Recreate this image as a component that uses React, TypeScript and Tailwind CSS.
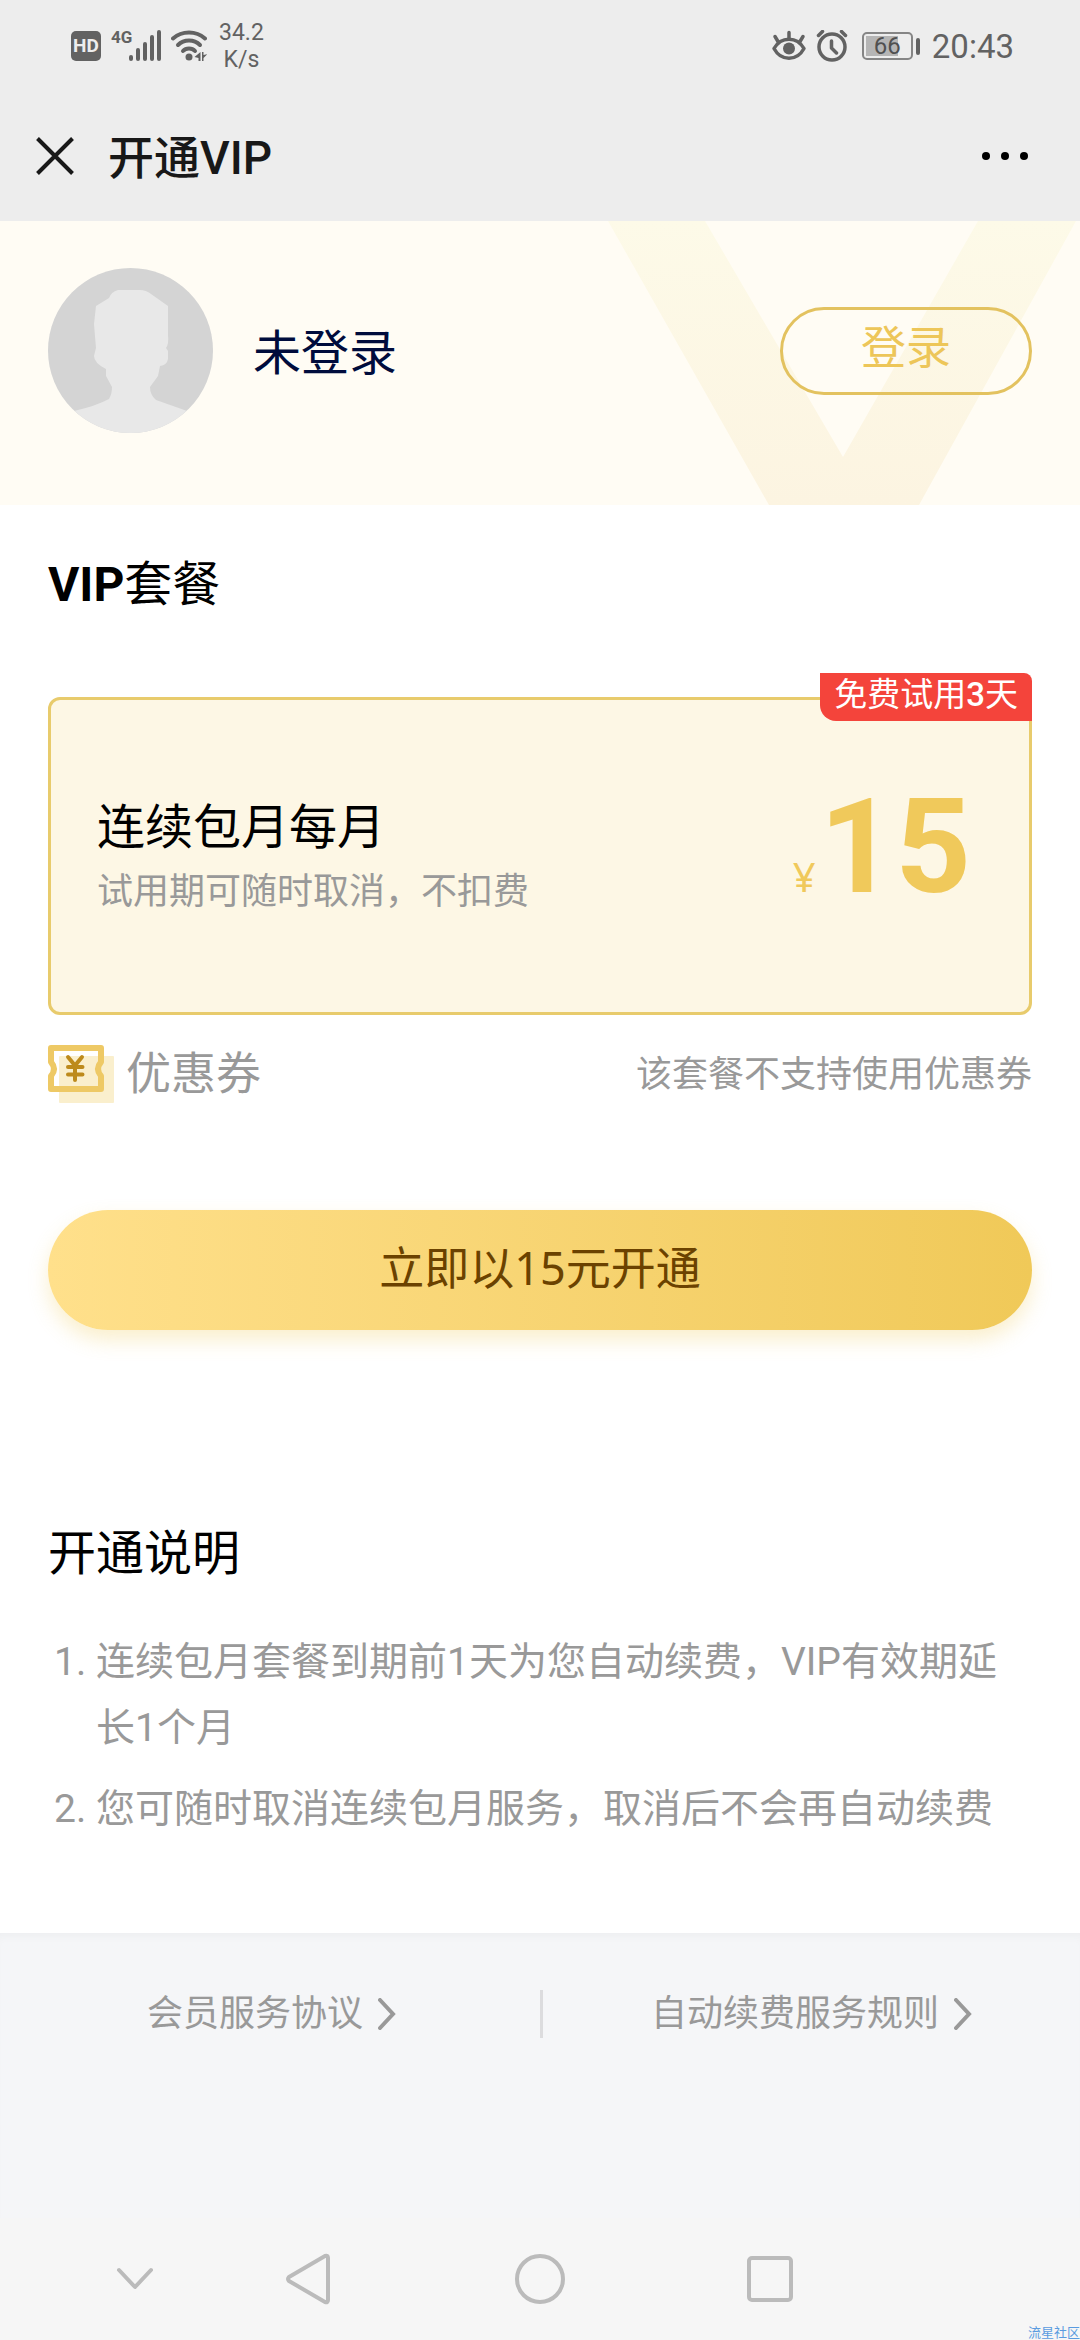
import { ReactNode } from 'react';

const rules = [
  '连续包月套餐到期前1天为您自动续费，VIP有效期延长1个月',
  '您可随时取消连续包月服务，取消后不会再自动续费',
];

const SignalIcon = () => (
  <svg width="32" height="32" viewBox="0 0 32 32" fill="#626262">
    <rect x="0" y="25" width="4" height="6" rx="2" />
    <rect x="7" y="18" width="4" height="13" rx="2" />
    <rect x="14" y="12" width="4" height="19" rx="2" />
    <rect x="21" y="5" width="4" height="26" rx="2" />
    <rect x="28" y="0" width="4" height="31" rx="2" />
  </svg>
);

const WifiIcon = () => (
  <svg
    width="36"
    height="32"
    viewBox="0 0 36 32"
    fill="none"
    stroke="#626262"
    strokeWidth="4"
    strokeLinecap="round"
  >
    <path d="M2 8.5C11 .5 25 .5 34 8.5" />
    <path d="M7 15C13 9 23 9 29 15" />
    <path d="M12 21C15 17.500 21 17.500 24 21" />
    <circle cx="18" cy="27" r="3.500" fill="#626262" stroke="none" />
    <path
      d="M29.500 22v9h-2v-3l-4-1zM31 22h1.500v3l4-1l-4 4v3h-1.500z"
      fill="#626262"
      stroke="none"
    />
  </svg>
);

const EyeIcon = () => (
  <svg
    width="34"
    height="32"
    viewBox="0 0 34 32"
    fill="none"
    stroke="#626262"
    strokeWidth="3.500"
    strokeLinecap="round"
    strokeLinejoin="round"
  >
    <path d="M2 18.500C9 6 25 6 32 18.500C25 31.500 9 31.500 2 18.500z" />
    <circle cx="17" cy="18.500" r="6" fill="#626262" stroke="none" />
    <path d="M17 2.500v6M3 6.500l3 5M31 6.500l-3 5" />
  </svg>
);

const AlarmIcon = () => (
  <svg
    width="32"
    height="32"
    viewBox="0 0 32 32"
    fill="none"
    stroke="#626262"
    strokeWidth="3.500"
    strokeLinecap="round"
    strokeLinejoin="round"
  >
    <circle cx="16" cy="17" r="13" />
    <path d="M15.500 11v7l5 5M2.500 5.500l4-4M29.500 5.500l-4-4" />
  </svg>
);

const StatusBar = () => (
  <div className="flex h-[90px] items-center justify-between pt-[2px] pl-[71px] pr-[66px] text-[#626262]">
    <div className="flex items-center">
      <span className="flex h-[30px] w-[30px] items-center justify-center rounded-[5px] bg-[#626262] text-[19px] font-bold text-[#ededed]">
        HD
      </span>
      <span className="mt-2 ml-[10px] w-[18px] self-start text-[17px] leading-[20px] font-bold">
        4G
      </span>
      <SignalIcon />
      <span className="ml-[10px]">
        <WifiIcon />
      </span>
      <span className="ml-3 text-center text-[23px] leading-[27px]">
        34.2
        <br />
        K/s
      </span>
    </div>
    <div className="flex items-center">
      <EyeIcon />
      <span className="ml-[10px]">
        <AlarmIcon />
      </span>
      <span className="ml-[14px] flex h-[28px] w-[51px] rounded-[5px] border-2 border-[#858585] p-[2px]">
        <span className="flex h-full w-[32px] items-center bg-[#b5b5b5] pl-2 text-[24px] leading-none text-[#505050]">
          66
        </span>
      </span>
      <span className="ml-[3px] h-[17px] w-1 rounded-[2px] bg-[#626262]"></span>
      <span className="ml-3 text-[33px] leading-none">20:43</span>
    </div>
  </div>
);

const TitleBar = () => (
  <header className="flex h-[131px] items-center justify-between pl-9 pr-[52px] text-[#181818]">
    <div className="flex items-center gap-[34px]">
      <button aria-label="关闭">
        <svg
          width="38"
          height="38"
          viewBox="0 0 38 38"
          stroke="#181818"
          strokeWidth="4"
        >
          <path d="M1.500 1.500l35 35M36.500 1.500l-35 35" />
        </svg>
      </button>
      <h1 className="pt-1 text-[46px] leading-[56px] font-medium">开通VIP</h1>
    </div>
    <button aria-label="更多" className="flex gap-[11px]">
      <span className="h-2 w-2 rounded-full bg-black"></span>
      <span className="h-2 w-2 rounded-full bg-black"></span>
      <span className="h-2 w-2 rounded-full bg-black"></span>
    </button>
  </header>
);

const Avatar = () => (
  <svg
    width="165"
    height="165"
    viewBox="0 0 165 165"
    className="shrink-0 rounded-full"
  >
    <rect width="165" height="165" fill="#d4d4d4" />
    <path
      d="M70 22H92Q98 22 103 26L120 38V67Q121 76 118 80L120 83V91Q119 97 112 98L110 108L102 119Q102 127 108 132L142 144L165 165H0L26 143Q48 138 61 131Q64 126 64 119L58 108V101Q46 95 46 88L48 80L46 56L48 38L61 30Q63 24 70 22z"
      fill="#e8e8e8"
    />
  </svg>
);

const Hero = () => (
  <section className="relative flex items-center justify-between bg-[#fffcf4] px-12 pt-[47px] pb-[72px]">
    <svg
      className="absolute top-0 right-0"
      width="472"
      height="284"
      viewBox="0 0 472 284"
    >
      <defs>
        <linearGradient id="vFill" x1="0" y1="0" x2="0" y2="1">
          <stop offset="0" stopColor="#fdfae8" />
          <stop offset="1" stopColor="#fcf4e1" />
        </linearGradient>
      </defs>
      <path
        d="M0 0H97L235 236L370 0H468L311 284H161z"
        fill="url(#vFill)"
      />
    </svg>
    <div className="relative flex items-center gap-10">
      <Avatar />
      <span className="pt-[6px] text-[48px] leading-[64px] text-[#000c3c]">
        未登录
      </span>
    </div>
    <button className="relative h-[88px] w-[252px] rounded-full border-3 border-[#e3c25f] pb-1 text-[45px] leading-[56px] text-[#edc659]">
      登录
    </button>
  </section>
);

const CouponIcon = () => (
  <svg width="66" height="58" viewBox="0 0 66 58" fill="none">
    <rect x="11" y="11" width="55" height="47" rx="1" fill="#faefcd" />
    <path
      d="M3 3H53V17Q47 24 53 31V44H3V31Q9 24 3 17z"
      stroke="#eec965"
      strokeWidth="6"
      strokeLinejoin="round"
    />
    <path
      d="M20 12l7 8.500l7-8.500M20 22h14.500M20 29.500h14.500M27 21v14"
      stroke="#bd8a1c"
      strokeWidth="4"
      strokeLinecap="round"
    />
  </svg>
);

const Plan = () => (
  <div className="relative mt-20 flex h-[318px] items-center justify-between rounded-xl border-3 border-[#e8cb6c] bg-[#fdf7e5] pr-[58px] pl-[46px]">
    <span className="absolute -top-[27px] -right-[3px] h-12 rounded-tr-lg rounded-bl-2xl bg-[#f4443b] px-[14px] text-[33px] leading-[44px] font-medium text-white">
      <span className="font-normal">免费试用</span>3
      <span className="font-normal">天</span>
    </span>
    <div>
      <h3 className="text-[48px] leading-[72px] text-black">连续包月每月</h3>
      <p className="text-[36px] leading-[56px] text-[#999]">
        试用期可随时取消，不扣费
      </p>
    </div>
    <p className="flex items-baseline gap-1 pb-[18px] text-[#f0c95b]">
      <span className="font-['Noto_Sans',sans-serif] text-[40px] leading-none">
        ¥
      </span>
      <span className="text-[132px] leading-none font-bold">15</span>
    </p>
  </div>
);

const FooterLink = ({ children }: { children: ReactNode }) => (
  <a
    href="#"
    className="flex flex-1 items-center justify-center gap-[15px] text-[36px] leading-[48px] text-[#999]"
  >
    {children}
    <svg
      width="18"
      height="32"
      viewBox="0 0 18 32"
      fill="none"
      stroke="#999"
      strokeWidth="4"
      strokeLinecap="round"
    >
      <path d="M2 2L15 16L2 30" />
    </svg>
  </a>
);

const NavBar = () => (
  <nav className="grid h-[122px] grid-cols-[1fr_230px_230px_230px_1fr] items-center bg-[#f6f6f6]">
    <button aria-label="收起" className="justify-self-end pr-[41px]">
      <svg
        width="38"
        height="24"
        viewBox="0 0 38 24"
        fill="none"
        stroke="#bbb"
        strokeWidth="4"
        strokeLinecap="round"
        strokeLinejoin="round"
      >
        <path d="M3 3L19 20L35 3" />
      </svg>
    </button>
    <button aria-label="返回" className="flex justify-center">
      <svg
        width="48"
        height="52"
        viewBox="0 0 48 52"
        fill="none"
        stroke="#bbb"
        strokeWidth="4"
        strokeLinejoin="round"
      >
        <path d="M3 28Q1 26 3 24L39 3Q42 2 42 5V47Q42 50 39 49z" />
      </svg>
    </button>
    <button aria-label="主页" className="flex justify-center">
      <span className="h-[50px] w-[50px] rounded-full border-4 border-[#bbb]"></span>
    </button>
    <button aria-label="最近任务" className="flex justify-center">
      <span className="h-[46px] w-[46px] rounded-[5px] border-4 border-[#bbb]"></span>
    </button>
  </nav>
);

export default function App() {
  return (
    <div className="relative flex min-h-screen flex-col overflow-hidden bg-white font-['Roboto','Noto_Sans_CJK_SC',sans-serif]">
      <div className="bg-[#ededed]">
        <StatusBar />
        <TitleBar />
      </div>
      <Hero />

      <main className="px-12 pt-12 pb-[91px]">
        <h2 className="text-[48px] leading-[64px] text-black">
          <b>VIP</b>套餐
        </h2>
        <Plan />

        <div className="mt-[30px] flex items-center justify-between text-[#999]">
          <div className="flex items-center gap-3">
            <CouponIcon />
            <span className="pt-[2px] text-[45px] leading-[56px]">优惠券</span>
          </div>
          <span className="pt-[2px] text-[36px] leading-[56px]">
            该套餐不支持使用优惠券
          </span>
        </div>

        <button className="mt-[107px] h-[120px] w-full rounded-full bg-linear-to-r from-[#ffe08b] to-[#f0c958] pb-1 font-['Noto_Sans','Noto_Sans_CJK_SC',sans-serif] text-[45px] leading-[60px] text-[#6b4200] shadow-[0_10px_20px_rgba(240,201,88,0.3)]">
          立即以15元开通
        </button>

        <h2 className="mt-48 text-[48px] leading-[64px] text-black">
          开通说明
        </h2>
        <ol className="mt-[43px] flex list-outside list-decimal flex-col gap-[15px] pl-12 text-[39px] leading-[66px] text-[#999]">
          {rules.map((rule) => (
            <li key={rule}>{rule}</li>
          ))}
        </ol>
      </main>

      <footer className="flex flex-1 items-start bg-[#f5f6f8] pt-[57px] pl-[3px] shadow-[inset_0_8px_8px_-4px_rgba(0,0,0,0.03)]">
        <FooterLink>会员服务协议</FooterLink>
        <span className="h-12 w-[3px] bg-[#dcdcde]"></span>
        <FooterLink>自动续费服务规则</FooterLink>
      </footer>
      <NavBar />
      <span className="absolute right-0 bottom-0 text-[13px] leading-[14px] text-[#5a9be0]">
        流星社区
      </span>
    </div>
  );
}
